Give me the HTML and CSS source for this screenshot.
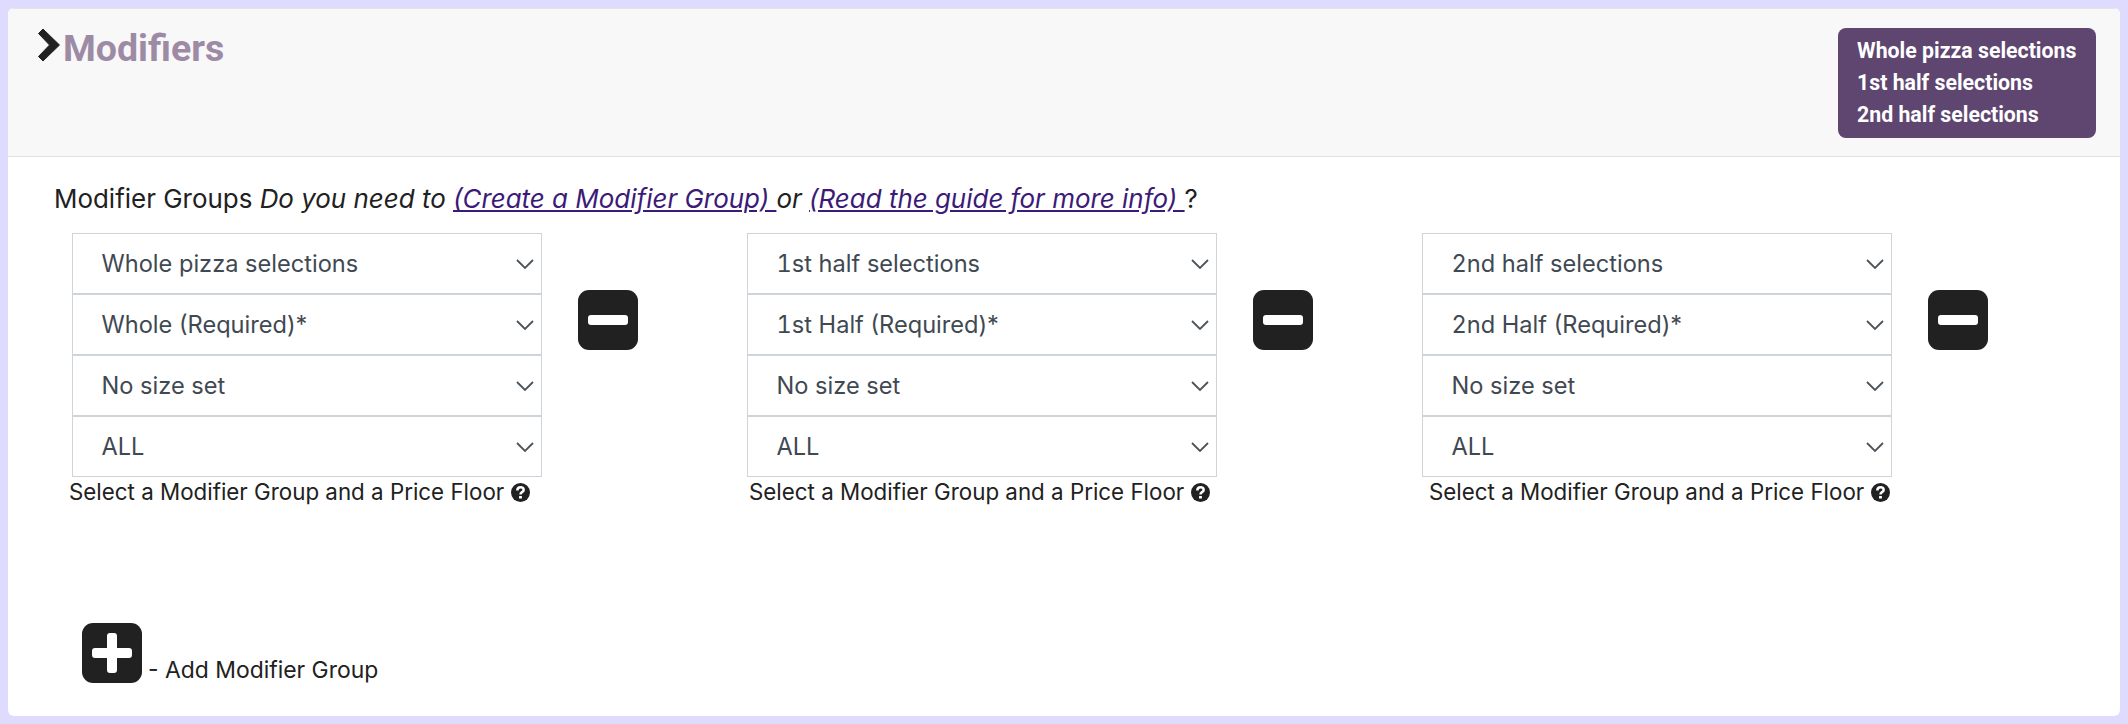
FILE: index.html
```html
<!DOCTYPE html>
<html lang="en">
<head>
<meta charset="utf-8">
<title>Modifiers</title>
<link rel="stylesheet" href="styles.css">
</head>
<body>
<main class="card">
  <header class="card-header">
    <div class="title">
      <svg class="chevron" viewBox="0 0 24 36" width="24" height="36"><path d="M6 2 L22.500 18 L6 34 L1.500 29.500 L12.500 18 L1.500 6.500 Z"/></svg>
      <h1>Modifiers</h1>
    </div>
    <ul class="summary">
      <li>Whole pizza selections</li>
      <li>1st half selections</li>
      <li>2nd half selections</li>
    </ul>
  </header>
  <section class="card-body">
    <p class="intro">Modifier Groups <em>Do you need to <a href="#">(Create a Modifier Group) </a>or <a href="#">(Read the guide for more info) </a></em>?</p>
    <div class="groups">
      <div class="group">
        <div class="stack">
          <div class="select">Whole pizza selections<svg class="caret" viewBox="0 0 18 10"><path d="M1 1l8 8 8-8"/></svg></div>
          <div class="select">Whole (Required)*<svg class="caret" viewBox="0 0 18 10"><path d="M1 1l8 8 8-8"/></svg></div>
          <div class="select">No size set<svg class="caret" viewBox="0 0 18 10"><path d="M1 1l8 8 8-8"/></svg></div>
          <div class="select">ALL<svg class="caret" viewBox="0 0 18 10"><path d="M1 1l8 8 8-8"/></svg></div>
        </div>
        <button class="square minus" type="button" aria-label="Remove"><svg viewBox="0 0 60 60"><rect x="10" y="25" width="40" height="10" rx="3"/></svg></button>
      </div>
      <div class="group">
        <div class="stack">
          <div class="select"><span class="num">1</span>st half selections<svg class="caret" viewBox="0 0 18 10"><path d="M1 1l8 8 8-8"/></svg></div>
          <div class="select"><span class="num">1</span>st Half (Required)*<svg class="caret" viewBox="0 0 18 10"><path d="M1 1l8 8 8-8"/></svg></div>
          <div class="select">No size set<svg class="caret" viewBox="0 0 18 10"><path d="M1 1l8 8 8-8"/></svg></div>
          <div class="select">ALL<svg class="caret" viewBox="0 0 18 10"><path d="M1 1l8 8 8-8"/></svg></div>
        </div>
        <button class="square minus" type="button" aria-label="Remove"><svg viewBox="0 0 60 60"><rect x="10" y="25" width="40" height="10" rx="3"/></svg></button>
      </div>
      <div class="group">
        <div class="stack">
          <div class="select"><span class="num">2</span>nd half selections<svg class="caret" viewBox="0 0 18 10"><path d="M1 1l8 8 8-8"/></svg></div>
          <div class="select"><span class="num">2</span>nd Half (Required)*<svg class="caret" viewBox="0 0 18 10"><path d="M1 1l8 8 8-8"/></svg></div>
          <div class="select">No size set<svg class="caret" viewBox="0 0 18 10"><path d="M1 1l8 8 8-8"/></svg></div>
          <div class="select">ALL<svg class="caret" viewBox="0 0 18 10"><path d="M1 1l8 8 8-8"/></svg></div>
        </div>
        <button class="square minus" type="button" aria-label="Remove"><svg viewBox="0 0 60 60"><rect x="10" y="25" width="40" height="10" rx="3"/></svg></button>
      </div>
    </div>
    <div class="helps">
      <div class="help">Select a Modifier Group and a Price Floor <svg class="q" viewBox="0 0 18 18"><circle cx="9" cy="9" r="9"/><path class="q-mark" d="M6 7c0-4 6-4 6-.4 0 2-3 2-3 4.2"/><rect class="q-dot" x="7.6" y="12.2" width="2.8" height="2.6" rx=".5"/></svg></div>
      <div class="help">Select a Modifier Group and a Price Floor <svg class="q" viewBox="0 0 18 18"><circle cx="9" cy="9" r="9"/><path class="q-mark" d="M6 7c0-4 6-4 6-.4 0 2-3 2-3 4.2"/><rect class="q-dot" x="7.6" y="12.2" width="2.8" height="2.6" rx=".5"/></svg></div>
      <div class="help">Select a Modifier Group and a Price Floor <svg class="q" viewBox="0 0 18 18"><circle cx="9" cy="9" r="9"/><path class="q-mark" d="M6 7c0-4 6-4 6-.4 0 2-3 2-3 4.2"/><rect class="q-dot" x="7.6" y="12.2" width="2.8" height="2.6" rx=".5"/></svg></div>
    </div>
    <div class="add">
      <button class="square plus" type="button" aria-label="Add"><svg viewBox="0 0 60 60"><path d="M25 13a3 3 0 0 1 3-3h4a3 3 0 0 1 3 3v12h12a3 3 0 0 1 3 3v4a3 3 0 0 1-3 3H35v12a3 3 0 0 1-3 3h-4a3 3 0 0 1-3-3V35H13a3 3 0 0 1-3-3v-4a3 3 0 0 1 3-3h12z"/></svg></button>
      <span class="add-label">- Add Modifier Group</span>
    </div>
  </section>
</main>
</body>
</html>
```

FILE: styles.css
```css
* { box-sizing: border-box; }
html, body { height: 100%; }
body {
  margin: 0;
  padding: 8px;
  background: #dfdbff;
  font-family: Inter, "Liberation Sans", sans-serif;
  color: #212121;
  overflow: hidden;
}
.card {
  height: 708px;
  background: #fff;
  border-radius: 6px;
  overflow: hidden;
}
.card-header {
  height: 149px;
  background: #f8f8f8;
  border-top: 1px solid #e3e3e3;
  border-bottom: 1px solid #e0e0e0;
  display: flex;
  justify-content: space-between;
  align-items: flex-start;
  padding: 19px 24px 0 29px;
}
.title { display: flex; align-items: flex-start; }
.chevron { display: block; margin-top: -1px; flex: none; fill: #212121; stroke: #212121; stroke-width: 1; stroke-linejoin: round; }
.title h1 {
  margin: -1px 0 0 2px;
  font: 700 37.5px/42px Roboto, sans-serif;
  color: #9d8aa5;
}
.summary {
  list-style: none;
  margin: 0;
  padding: 7px 19px 9px 19px;
  width: 258px;
  height: 110px;
  background: #5e4670;
  border-radius: 8px;
  color: #fff;
  font: 700 21.3px/32px Roboto, sans-serif;
}
.card-body { padding: 0 0 0 46px; }
.intro {
  margin: 0;
  padding-top: 25px;
  font-size: 25.95px;
  line-height: 34px;
  height: 76px;
  color: #212121;
}
.intro a { color: #3c1a78; text-decoration: underline; }
.groups { display: flex; margin-left: 18px; }
.group { width: 675px; display: flex; align-items: flex-start; flex: none; }
.stack { width: 470px; }
.select {
  height: 61px;
  border: 1px solid #ced4da;
  background: #fff;
  padding-left: 28.5px;
  font-size: 23.6px;
  line-height: 59px;
  color: #3f4952;
  position: relative;
}
.num { font-variant-numeric: tabular-nums; }
.caret {
  position: absolute;
  right: 7px;
  top: 25px;
  width: 18px;
  height: 10px;
  fill: none;
  stroke: #4b545c;
  stroke-width: 1.8;
}
.square {
  flex: none;
  display: block;
  padding: 0;
  border: 0;
  width: 60px;
  height: 60px;
  border-radius: 11px;
  background: #212121;
}
.square svg { display: block; width: 60px; height: 60px; fill: #fff; }
.minus { margin: 57px 0 0 36px; }
.helps { display: flex; margin-left: 15px; }
.help {
  width: 680px;
  flex: none;
  font-size: 22.35px;
  line-height: 30px;
  color: #212121;
  white-space: nowrap;
}
.q { width: 19px; height: 19px; vertical-align: -2px; fill: #212121; }
.q-mark { fill: none; stroke: #fff; stroke-width: 2.4; }
.q-dot { fill: #fff; }
.add { display: flex; align-items: flex-end; margin: 116px 0 0 28px; }
.add-label { font-size: 22.9px; line-height: 30px; margin-left: 6px; margin-bottom: -2px; color: #212121; }
```
